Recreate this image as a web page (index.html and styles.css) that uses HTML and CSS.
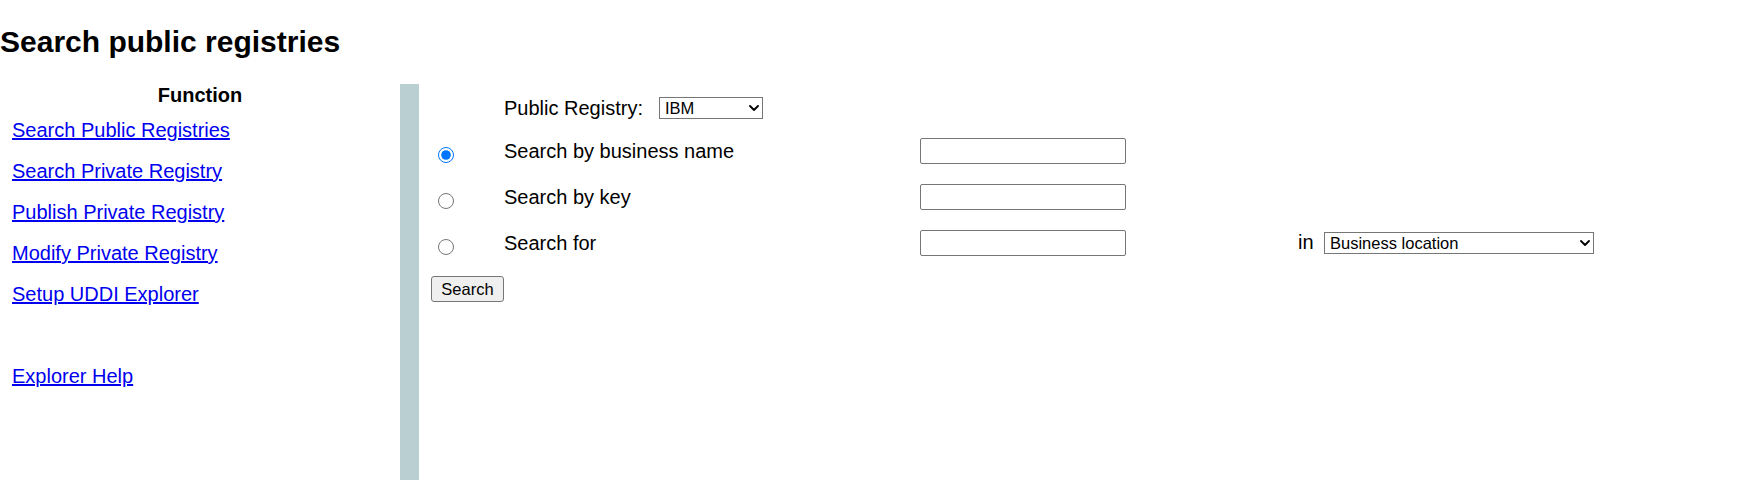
FILE: index.html
```html
<!DOCTYPE html>
<html>
<head>
<meta charset="utf-8">
<title>Search public registries</title>
<link rel="stylesheet" href="styles.css">
</head>
<body>
<h2 class="title">Search public registries</h2>
<div class="layout">
  <nav class="nav">
    <div class="nav-head">Function</div>
    <ul class="nav-list">
      <li><a href="#">Search Public Registries</a></li>
      <li><a href="#">Search Private Registry</a></li>
      <li><a href="#">Publish Private Registry</a></li>
      <li><a href="#">Modify Private Registry</a></li>
      <li><a href="#">Setup UDDI Explorer</a></li>
      <li class="spacer"><a href="#">Explorer Help</a></li>
    </ul>
  </nav>
  <div class="divider"></div>
  <form class="panel">
    <div class="registry">
      <span class="label">Public Registry:</span>
      <span class="selwrap">
        <select class="sel sel-reg"><option>IBM</option><option>Microsoft</option></select>
        <svg class="chev" width="10" height="6" viewBox="0 0 10 6"><path d="M1 1 L5 5 L9 1" fill="none" stroke="#000" stroke-width="1.8" stroke-linecap="round" stroke-linejoin="round"/></svg>
      </span>
    </div>

    <div class="cell-radio"><input type="radio" name="mode" class="radio" checked></div>
    <div class="label">Search by business name</div>
    <div class="cell-input"><input type="text" class="txt"></div>

    <div class="cell-radio"><input type="radio" name="mode" class="radio"></div>
    <div class="label">Search by key</div>
    <div class="cell-input"><input type="text" class="txt"></div>

    <div class="cell-radio"><input type="radio" name="mode" class="radio"></div>
    <div class="label">Search for</div>
    <div class="cell-input"><input type="text" class="txt"></div>
    <div class="label in">in</div>
    <div>
      <span class="selwrap">
        <select class="sel sel-loc"><option>Business location</option></select>
        <svg class="chev" width="10" height="6" viewBox="0 0 10 6"><path d="M1 1 L5 5 L9 1" fill="none" stroke="#000" stroke-width="1.8" stroke-linecap="round" stroke-linejoin="round"/></svg>
      </span>
    </div>

    <div class="cell-btn"><button type="button" class="btn">Search</button></div>
  </form>
</div>
</body>
</html>
```

FILE: styles.css
```css
html, body {
  margin: 0;
  padding: 0;
  background: #ffffff;
  color: #000000;
  font-family: "Liberation Sans", Arial, sans-serif;
}

.title {
  font-size: 30px;
  font-weight: bold;
  margin: 25px 0 25px 0;
  line-height: 34px;
}

.layout {
  display: flex;
  align-items: stretch;
  min-height: 400px;
}

.nav {
  width: 400px;
  flex: 0 0 400px;
}

.nav-head {
  text-align: center;
  font-weight: bold;
  font-size: 20px;
  line-height: 23px;
}

.nav-list {
  list-style: none;
  margin: 12px 0 0 0;
  padding: 0 0 0 12px;
  display: flex;
  flex-direction: column;
  gap: 18px;
}

.nav-list li {
  font-size: 20px;
  line-height: 23px;
}

.nav-list li.spacer {
  margin-top: 41px;
}

.nav-list a {
  color: #0000ee;
  text-decoration: underline;
}

.divider {
  width: 19px;
  flex: 0 0 19px;
  background: #b9cfd1;
}

.panel {
  margin: 0;
  padding: 4px 0 0 12px;
  display: grid;
  grid-template-columns: 73px 416px 378px 26px 280px;
  grid-template-rows: 40px 46px 46px 46px 46px;
  align-items: center;
  align-content: start;
}

.label {
  font-size: 20px;
  line-height: 23px;
}

.registry {
  grid-column: 2 / 4;
  display: flex;
  align-items: center;
  gap: 16px;
}

.cell-radio {
  grid-column: 1;
  display: flex;
}

.radio {
  width: 16px;
  height: 16px;
  margin: 8px 0 0 7px;
}

.cell-input {
  display: flex;
}

.txt {
  box-sizing: border-box;
  width: 206px;
  height: 26px;
  border: 1px solid #767676;
  border-radius: 2px;
  margin: 0;
  padding: 1px 3px;
  font-size: 16.5px;
  font-family: "Liberation Sans", Arial, sans-serif;
}

.in {
  margin-top: -2px;
}

.selwrap {
  position: relative;
  display: inline-flex;
}

.sel {
  box-sizing: border-box;
  height: 22px;
  margin: 0;
  padding: 0 16px 0 5px;
  font-size: 16.5px;
  font-family: "Liberation Sans", Arial, sans-serif;
  color: #000000;
  background: #ffffff;
  border: 1px solid #767676;
  border-radius: 0;
  appearance: none;
  -webkit-appearance: none;
}

.chev {
  position: absolute;
  right: 4px;
  top: 8px;
  pointer-events: none;
}

.sel-reg {
  width: 104px;
}

.sel-loc {
  width: 270px;
}

.cell-btn {
  grid-column: 1 / 3;
  display: flex;
}

.btn {
  box-sizing: border-box;
  width: 73px;
  height: 26px;
  margin: 0;
  padding: 0;
  font-size: 16.5px;
  font-family: "Liberation Sans", Arial, sans-serif;
  color: #000000;
  background: #efefef;
  border: 1px solid #767676;
  border-radius: 3px;
}
```
